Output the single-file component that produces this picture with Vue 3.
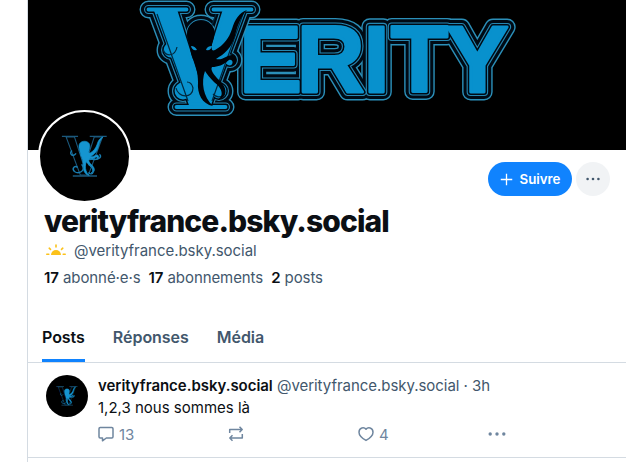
<script setup>
import { ref } from 'vue'

const tabs = ['Posts', 'Réponses', 'Média']
const activeTab = ref('Posts')

const profile = {
  name: 'verityfrance.bsky.social',
  handle: '@verityfrance.bsky.social'
}

const stats = [
  { count: 17, label: 'abonné·e·s' },
  { count: 17, label: 'abonnements' },
  { count: 2, label: 'posts' }
]

// neon outline, widest stroke first
const outlines = [
  { color: '#2b8fb8', width: 17 },
  { color: '#000a14', width: 14.2 },
  { color: '#2586b0', width: 8 },
  { color: '#000a14', width: 5.8 },
  { color: '#0891cd', width: 2.8 }
]
</script>

<template>
  <main class="page">
    <svg class="defs" width="0" height="0" aria-hidden="true">
      <defs>
        <path id="octopus" d="M188 40C185 28 191 21 201 21C212 21 217 30 213 41C211 47 211 52 215 50C224 45 229 38 232 29C235 19 239 13 247 10C240 17 237 28 235 36C231 49 224 54 216 59C223 61 227 54 233 55C239 58 237 66 230 66C234 64 233 59 229 60C223 65 218 67 212 67C210 70 214 75 219 80C228 88 228 98 217 100C225 96 222 88 214 82C210 78 207 74 205 71C201 82 203 97 213 106C202 104 197 94 198 82C198 73 196 67 194 61C190 54 191 49 188 40Z" />
        <g id="mini-mark">
          <text class="mini-v" x="154.5" y="105">V</text>
          <path class="mini-serif" d="M145 9H185M214 9H256M172 107H232" />
          <use href="#octopus" class="mini-octopus" />
          <path class="mini-curl" d="M170 44C161 53 173 61 180 51M194 78C206 94 187 104 176 96C168 87 178 80 184 86M210 78C232 92 220 110 211 98M214 64C230 70 248 62 238 53" />
        </g>
        <text id="erity" class="letter" x="239.3 296.7 363.5 390.8 446" y="92">ERITY</text>
        <g id="big-v">
          <rect x="148" y="9" width="39" height="1" rx=".5" />
          <rect x="213" y="9" width="39" height="1" rx=".5" />
          <rect x="176" y="106.5" width="50" height="1" rx=".5" />
          <circle cx="171" cy="50" r="6" />
          <circle cx="183" cy="91" r="7" />
          <circle cx="219" cy="91" r="6" />
          <circle cx="230" cy="60" r="4" />
          <circle cx="201" cy="34" r="11" />
          <text class="letter letter-v" x="154.5" y="104">V</text>
        </g>
      </defs>
    </svg>

    <div class="banner">
      <svg viewBox="0 0 598 150" width="598" height="150" role="img" aria-label="Verity">
        <g transform="translate(-28 0)">
          <template v-for="shape in ['#erity', '#big-v']" :key="shape">
            <use
              v-for="line in outlines"
              :key="line.width"
              :href="shape"
              :fill="line.color"
              :stroke="line.color"
              :stroke-width="line.width"
              stroke-linejoin="round"
            />
          </template>
          <path class="curl" d="M163 49C165 57 175 57 177 47M176 88C178 98 193 99 193 88C192 84 190 82 187 82M213 94C220 101 229 94 222 86" />
          <path class="seam" d="M157 14L188 101M216 14L211 28M243 14L212 101" />
          <use href="#octopus" class="cut" />
          <path class="eye" d="M191 46Q195 46 197 50Q192 51 191 46M212 46Q207 46 206 50Q211 51 212 46" />
        </g>
      </svg>
    </div>

    <section class="profile">
      <div class="profile-top">
        <div class="avatar">
          <svg viewBox="0 0 90 90"><use href="#mini-mark" transform="translate(-37 21) scale(.408)" /></svg>
        </div>
        <div class="actions">
          <button class="follow">
            <svg viewBox="0 0 14 14" width="13" height="13"><path d="M7 .8V13.2M.8 7H13.2" /></svg>
            Suivre
          </button>
          <button class="more" aria-label="Plus">
            <svg viewBox="0 0 16 4" width="16" height="4"><circle cx="2.6" cy="2" r="1.3" /><circle cx="8" cy="2" r="1.3" /><circle cx="13.4" cy="2" r="1.3" /></svg>
          </button>
        </div>
      </div>

      <h1>{{ profile.name }}</h1>
      <div class="handle">
        <svg viewBox="0 0 20 12" width="20" height="12">
          <path class="sun" d="M5 11A5 5 0 0 1 15 11Z" />
          <path class="rays" d="M.8 10.3H2.8M17.2 10.3H19.2M3.2 4.2L4.5 5.4M16.8 4.2L15.5 5.4M10 1V3" />
        </svg>
        <span>{{ profile.handle }}</span>
      </div>
      <div class="stats">
        <span v-for="stat in stats" :key="stat.label"><b>{{ stat.count }}</b> {{ stat.label }}</span>
      </div>
    </section>

    <nav class="tabs">
      <button
        v-for="tab in tabs"
        :key="tab"
        :class="{ active: tab === activeTab }"
        @click="activeTab = tab"
      >{{ tab }}</button>
    </nav>

    <article class="post">
      <div class="post-avatar">
        <svg viewBox="0 0 90 90"><use href="#mini-mark" transform="translate(-37 21) scale(.408)" /></svg>
      </div>
      <div class="post-body">
        <div class="post-head"><b>{{ profile.name }}</b> <span>{{ profile.handle }} · 3h</span></div>
        <p>1,2,3 nous sommes là</p>
        <div class="post-actions">
          <span class="action">
            <svg viewBox="0 0 16 16" width="16" height="16"><path d="M2.2 1.5H13.8Q15 1.5 15 2.7V10.8Q15 12 13.8 12H8.3L4.5 14.8V12H2.2Q1 12 1 10.8V2.7Q1 1.5 2.2 1.5Z" /></svg>
            13
          </span>
          <span class="action">
            <svg viewBox="0 0 16 16" width="16" height="16"><path d="M1.7 7V3.5H14M11.5 .8L14.2 3.5L11.5 6.2M14.3 8V12H2M4.5 9.3L1.8 12L4.5 14.7" /></svg>
          </span>
          <span class="action">
            <svg viewBox="0 0 16 16" width="16" height="16"><path d="M8 3.2C6.2 .8 1 1.2 1 6.2C1 10 5 12.7 8 14.4C11 12.7 15 10 15 6.2C15 1.2 9.8 .8 8 3.2Z" /></svg>
            4
          </span>
          <span class="action dots">
            <svg viewBox="0 0 18 16" width="18" height="16"><circle cx="2.2" cy="8" r="1.7" /><circle cx="9" cy="8" r="1.7" /><circle cx="15.8" cy="8" r="1.7" /></svg>
          </span>
        </div>
      </div>
    </article>
  </main>
</template>

<style>
body {
  background: #fff;
  overflow: hidden;
}
</style>

<style scoped>
.page {
  height: 462px;
  margin-left: 27px;
  box-sizing: border-box;
  border-left: 1px solid #d4dbe2;
  background: #fff;
  color: #0b0f14;
  font-family: Inter, sans-serif;
  font-size: 15px;
  overflow: hidden;
}

.defs {
  position: absolute;
}

button {
  border: 0;
  padding: 0;
  background: none;
  font-family: inherit;
  cursor: pointer;
}

svg {
  display: block;
  flex: none;
}

.banner {
  height: 150px;
  background: #000;
  overflow: hidden;
}

.letter {
  font: bold 94px "Liberation Sans", sans-serif;
}

.letter-v {
  font-size: 136px;
}

.cut {
  fill: #000308;
}

.curl,
.seam {
  fill: none;
  stroke: #02293f;
  stroke-width: 1.2;
}

.eye {
  fill: #0991ce;
}

.mini-v {
  font: bold 138px "Liberation Sans", sans-serif;
  fill: #000;
  stroke: #1b587c;
  stroke-width: 2.6;
}

.mini-serif {
  fill: none;
  stroke: #1b587c;
  stroke-width: 3.5;
}

.mini-octopus {
  fill: #1595d0;
  stroke: #1595d0;
  stroke-width: 1.5;
}

.mini-curl {
  fill: none;
  stroke: #187caf;
  stroke-width: 3.5;
}

.profile {
  height: 171px;
  padding: 0 16px;
}

.profile-top {
  display: flex;
  justify-content: space-between;
  height: 54px;
}

.avatar {
  width: 89px;
  height: 89px;
  margin: -40px 0 0 -6px;
  border: 2px solid #fff;
  border-radius: 50%;
  background: #000;
  overflow: hidden;
}

.actions {
  display: flex;
  gap: 4px;
  padding-top: 12px;
}

.follow {
  display: flex;
  align-items: center;
  justify-content: center;
  gap: 7px;
  width: 84px;
  height: 34px;
  border-radius: 17px;
  background: #1083fe;
  color: #fff;
  font-size: 13.3px;
  font-weight: 600;
}

.follow path {
  stroke: #fff;
  stroke-width: 1.4;
}

.more {
  display: flex;
  align-items: center;
  justify-content: center;
  width: 34px;
  height: 34px;
  border-radius: 50%;
  background: #f1f3f5;
}

.more circle {
  fill: #42576c;
}

h1 {
  margin: 0;
  font-size: 30px;
  line-height: 35px;
  font-weight: 800;
  letter-spacing: -0.9px;
  white-space: nowrap;
}

.handle {
  display: flex;
  align-items: center;
  gap: 8px;
  height: 22px;
  padding-left: 2px;
  color: #42576c;
  letter-spacing: -0.03px;
}

.sun {
  fill: #fcc21b;
}

.rays {
  stroke: #fcc21b;
  stroke-width: 1.6;
  stroke-linecap: round;
}

.stats {
  display: flex;
  gap: 8px;
  margin-top: 7px;
  line-height: 20px;
  color: #42576c;
  letter-spacing: -0.08px;
}

.stats b {
  color: #0b0f14;
  font-weight: 600;
}

.tabs {
  display: flex;
  gap: 28px;
  height: 41px;
  padding-left: 14px;
  border-bottom: 1px solid #d4dbe2;
}

.tabs button {
  height: 41px;
  padding-bottom: 7px;
  border-bottom: 3px solid transparent;
  color: #42576c;
  font-size: 16px;
  font-weight: 600;
  letter-spacing: -0.04px;
}

.tabs .active {
  color: #0b0f14;
  border-bottom-color: #1083fe;
}

.post {
  display: flex;
  gap: 10px;
  height: 95px;
  padding: 12px 18px 0;
  box-sizing: border-box;
  border-bottom: 1px solid #d4dbe2;
}

.post-avatar {
  flex: none;
  width: 42px;
  height: 42px;
  border-radius: 50%;
  background: #000;
  overflow: hidden;
}

.post-head {
  line-height: 22px;
  color: #42576c;
  letter-spacing: -0.04px;
  white-space: nowrap;
}

.post-head b {
  color: #0b0f14;
  font-weight: 600;
}

.post p {
  margin: 0;
  line-height: 22px;
}

.post-actions {
  display: flex;
  margin-top: 6px;
}

.action {
  display: flex;
  align-items: center;
  gap: 5px;
  width: 130px;
  height: 18px;
  color: #6f869f;
}

.action path {
  fill: none;
  stroke: #6f869f;
  stroke-width: 1.5;
  stroke-linejoin: round;
}

.dots circle {
  fill: #6f869f;
}
</style>
